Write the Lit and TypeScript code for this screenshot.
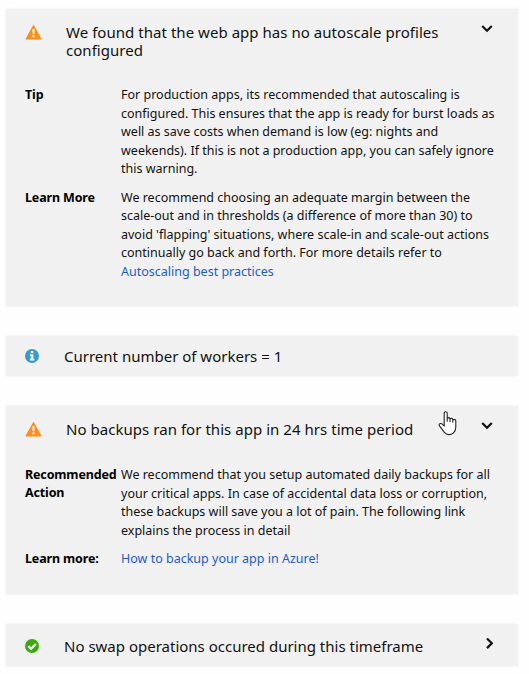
import { LitElement, html, svg, css } from "lit";
import { customElement, property } from "lit/decorators.js";

type Status = "warning" | "info" | "success";

interface Detail {
  label: string[];
  lines: string[];
  link?: string;
}

interface Insight {
  status: Status;
  title: string[];
  toggle?: "down" | "right";
  details?: Detail[];
}

const insights: Insight[] = [
  {
    status: "warning",
    title: ["We found that the web app has no autoscale profiles", "configured"],
    toggle: "down",
    details: [
      {
        label: ["Tip"],
        lines: [
          "For production apps, its recommended that autoscaling is",
          "configured. This ensures that the app is ready for burst loads as",
          "well as save costs when demand is low (eg: nights and",
          "weekends). If this is not a production app, you can safely ignore",
          "this warning.",
        ],
      },
      {
        label: ["Learn More"],
        lines: [
          "We recommend choosing an adequate margin between the",
          "scale-out and in thresholds (a difference of more than 30) to",
          "avoid 'flapping' situations, where scale-in and scale-out actions",
          "continually go back and forth. For more details refer to",
        ],
        link: "Autoscaling best practices",
      },
    ],
  },
  { status: "info", title: ["Current number of workers = 1"] },
  {
    status: "warning",
    title: ["No backups ran for this app in 24 hrs time period"],
    toggle: "down",
    details: [
      {
        label: ["Recommended", "Action"],
        lines: [
          "We recommend that you setup automated daily backups for all",
          "your critical apps. In case of accidental data loss or corruption,",
          "these backups will save you a lot of pain. The following link",
          "explains the process in detail",
        ],
      },
      { label: ["Learn more:"], lines: [], link: "How to backup your app in Azure!" },
    ],
  },
  {
    status: "success",
    title: ["No swap operations occured during this timeframe"],
    toggle: "right",
  },
];

const glyphs = {
  warning: svg`<path d="M8.5 0.6 16.3 14.5q.5 1-.7 1H1.4q-1.2 0-.7-1Z" fill="#fd8f1b"/>
    <path d="M7.3 5.2h2.4l-.4 5H7.7Z M7.5 11.3h2v2h-2Z" fill="#fff"/>`,
  info: svg`<circle cx="7" cy="7" r="7" fill="#3a9bcb"/>
    <path d="M5.8 2h2.5v2.1H5.8Z M4.9 5.3h3.4v4.4h1v1.7H4.9V9.7h1V7h-1Z" fill="#fff"/>`,
  success: svg`<circle cx="7" cy="7" r="7" fill="#3da80f"/>
    <path d="M3.4 7.1 6.1 9.7 10.8 5" fill="none" stroke="#fff" stroke-width="2.2"/>`,
};

@customElement("insight-card")
export class InsightCard extends LitElement {
  @property({ attribute: false }) insight!: Insight;

  static styles = css`
    :host {
      display: block;
      background: #f1f1f1;
      box-shadow: 0 0 3px rgba(0, 0, 0, 0.07);
      box-sizing: border-box;
      padding-left: 19px;
      color: #111;
    }
    .head {
      display: flex;
      align-items: flex-start;
    }
    .status {
      display: block;
      flex: none;
      overflow: visible;
    }
    .title {
      flex: 1;
      font-size: 15px;
      line-height: 18px;
      white-space: nowrap;
    }
    .line {
      display: block;
    }
    .warning .title {
      margin-left: 24px;
      padding-top: 14px;
      letter-spacing: 0.04px;
    }
    .info .title,
    .success .title {
      margin-left: 25px;
      padding-top: 11px;
    }
    .success .title {
      padding-top: 13px;
    }
    .warning .status {
      margin-top: 15px;
    }
    .info .status {
      margin-top: 13px;
    }
    .success .status {
      margin-top: 15px;
    }
    .toggle {
      flex: none;
      margin: 15px 25px 0 0;
    }
    .success .toggle {
      margin: 13px 23px 0 0;
    }
    .details {
      display: grid;
      grid-template-columns: 96px 1fr;
      row-gap: 10px;
      padding-top: 27px;
      font-size: 12.5px;
      line-height: 18.5px;
      white-space: nowrap;
    }
    .single + .details {
      padding-top: 28px;
    }
    .label {
      font-weight: 700;
      color: #000;
      line-height: 18px;
      letter-spacing: -0.15px;
    }
    .link {
      color: #1d5cc9;
      text-decoration: none;
    }
  `;

  render() {
    const { status, title, toggle, details } = this.insight;
    const wide = status === "warning";
    return html`
      <div class="head ${status} ${title.length === 1 ? "single" : ""}">
        <svg class="status" width=${wide ? 17 : 14} height=${wide ? 16 : 14}>${glyphs[status]}</svg>
        <div class="title">${title.map((t) => html`<span class="line">${t}</span>`)}</div>
        ${toggle
          ? html`<svg class="toggle" width="12" height="12" fill="none" stroke="#111" stroke-width="2.2">
              ${toggle === "down"
                ? svg`<path d="M1.2 2 6 6.8 10.8 2"/>`
                : svg`<path d="M4 1.5 8.8 6.3 4 11.1"/>`}
            </svg>`
          : ""}
      </div>
      ${details
        ? html`<div class="details">
            ${details.map(
              (d) => html`
                <div class="label">${d.label.map((t) => html`<span class="line">${t}</span>`)}</div>
                <div>
                  ${d.lines.map((t) => html`<span class="line">${t}</span>`)}
                  ${d.link ? html`<a class="link">${d.link}</a>` : ""}
                </div>
              `
            )}
          </div>`
        : ""}
    `;
  }
}

@customElement("app-root")
export class AppRoot extends LitElement {
  static styles = css`
    :host {
      display: block;
      position: relative;
      box-sizing: border-box;
      height: 674px;
      padding: 9px 11px 8px 6px;
      background: #fefefe;
      font-family: "Noto Sans", "Open Sans", sans-serif;
    }
    .list {
      display: grid;
      grid-template-rows: 297px 40px 188px 42px;
      row-gap: 30px;
    }
    .pointer {
      position: absolute;
      left: 438px;
      top: 411px;
    }
  `;

  render() {
    return html`
      <div class="list">
        ${insights.map((i) => html`<insight-card .insight=${i}></insight-card>`)}
      </div>
      <svg class="pointer" width="20" height="26" viewBox="0 0 20 26">
        <path
          d="M6.2 15V2.4Q6.2.8 7.7.8T9.2 2.4V10.2 7.6Q10.7 5.6 12 7.6V10.8 8Q13.7 6.3 14.8 8.2V11.2 9Q17.3 7.8 17.8 9.9V16Q17.8 20 15.3 22.1 13.3 23.6 10.8 23.6 8.2 23.6 6.4 21.4L1.3 14.7Q.7 13 2.4 12.5 3.5 12.3 4.5 13.4Z"
          fill="#fff" stroke="#222" stroke-width="1.1" stroke-linejoin="round"/>
      </svg>
    `;
  }
}
